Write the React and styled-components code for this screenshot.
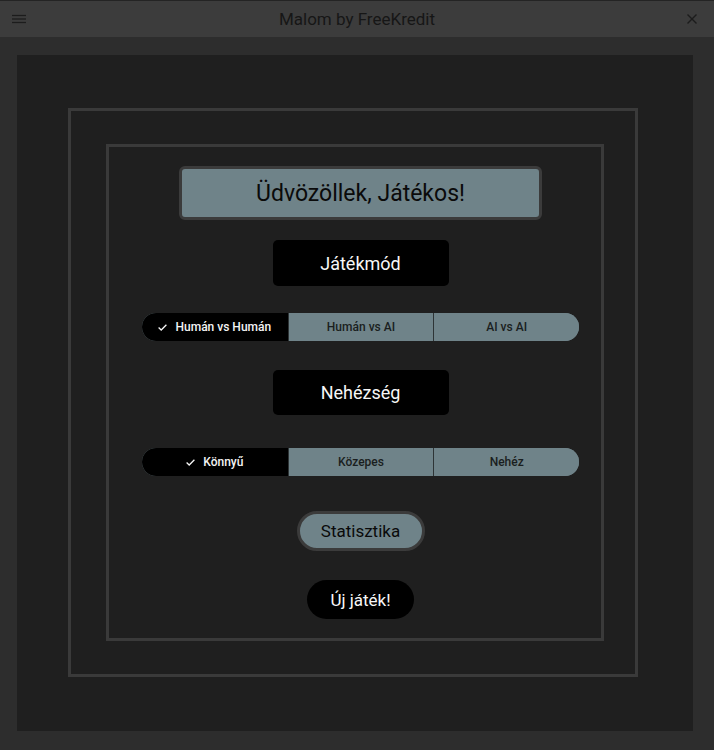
import React, { useState } from "react";
import styled, { createGlobalStyle } from "styled-components";

const GlobalStyle = createGlobalStyle`
  html, body {
    margin: 0;
    padding: 0;
    background: #2d2d2d;
  }
  body {
    font-family: Roboto, "Liberation Sans", Arial, sans-serif;
  }
  * {
    box-sizing: border-box;
  }
`;

const Window = styled.div`
  width: 714px;
  height: 750px;
  display: flex;
  flex-direction: column;
  background: #2d2d2d;
  border-top: 1px solid #242424;
`;

const TitleBar = styled.header`
  height: 36px;
  flex: 0 0 auto;
  display: grid;
  grid-template-columns: 40px 1fr 40px;
  align-items: center;
  background: #3c3c3c;
  color: #1d1d1d;
`;

const Title = styled.h1`
  margin: 0;
  text-align: center;
  font-size: 17px;
  font-weight: 400;
  color: #161616;
  letter-spacing: 0;
`;

const IconSlot = styled.button`
  border: 0;
  background: transparent;
  padding: 0;
  height: 36px;
  display: flex;
  align-items: center;
  justify-content: ${({ $end }) => ($end ? "flex-end" : "flex-start")};
  padding-left: ${({ $end }) => ($end ? "0" : "12px")};
  padding-right: ${({ $end }) => ($end ? "17px" : "0")};
  color: #1c1c1c;
  cursor: pointer;
`;

const Body = styled.main`
  flex: 1 1 auto;
  padding: 18px 21px 19px 17px;
`;

const Panel = styled.section`
  width: 676px;
  height: 676px;
  background: #1f1f1f;
  padding: 53px 55px 54px 51px;
`;

const Frame = styled.div`
  width: 100%;
  height: 100%;
  border: 3px solid #3a3a3a;
  display: flex;
  align-items: center;
  justify-content: center;
`;

const InnerFrame = styled.div`
  width: 498px;
  height: 497px;
  margin-left: 4px;
  border: 3px solid #3a3a3a;
  display: flex;
  flex-direction: column;
  align-items: center;
  justify-content: center;
  padding-left: 11px;
`;

const Welcome = styled.div`
  width: 363px;
  height: 54px;
  border: 3px solid #3b3b3b;
  border-radius: 6px;
  background: #6f8389;
  color: #0a0a0a;
  font-size: 23px;
  display: flex;
  align-items: center;
  justify-content: center;
  margin-bottom: 20px;
`;

const Heading = styled.div`
  width: 176px;
  height: ${({ $h }) => $h}px;
  border-radius: 5px;
  background: #000;
  color: #f7f7f7;
  font-size: 18px;
  font-weight: 400;
  display: flex;
  align-items: center;
  justify-content: center;
  margin-bottom: ${({ $mb }) => $mb}px;
`;

const Segmented = styled.div`
  width: 437px;
  height: 28px;
  border-radius: 14px;
  overflow: hidden;
  display: grid;
  grid-template-columns: repeat(3, 1fr);
  background: #6f8389;
  margin-bottom: ${({ $mb }) => $mb}px;
`;

const Segment = styled.button`
  border: 0;
  border-left: ${({ $first }) => ($first ? "0" : "1px solid #2e3436")};
  padding: 0;
  margin: 0;
  font-family: inherit;
  font-size: 12px;
  font-weight: 500;
  display: flex;
  align-items: center;
  justify-content: center;
  gap: 8px;
  background: ${({ $active }) => ($active ? "#000" : "#6f8389")};
  color: ${({ $active }) => ($active ? "#f4f4f4" : "#1a1e20")};
  cursor: pointer;
`;

const PillButton = styled.button`
  height: ${({ $h }) => $h}px;
  width: ${({ $w }) => $w}px;
  border-radius: 20px;
  border: ${({ $dark }) => ($dark ? "0" : "3px solid #3b3b3b")};
  background: ${({ $dark }) => ($dark ? "#000" : "#6f8389")};
  color: ${({ $dark }) => ($dark ? "#f7f7f7" : "#0a0a0a")};
  font-family: inherit;
  font-size: 17px;
  font-weight: 400;
  display: flex;
  align-items: center;
  justify-content: center;
  padding: 0;
  margin-bottom: ${({ $mb }) => $mb || 0}px;
  cursor: pointer;
`;

const MenuIcon = () => (
  <svg width="14" height="10" viewBox="0 0 14 10">
    <g stroke="#1c1c1c" strokeWidth="1.3">
      <line x1="0" y1="1.5" x2="14" y2="1.5" />
      <line x1="0" y1="5" x2="14" y2="5" />
      <line x1="0" y1="8.5" x2="14" y2="8.5" />
    </g>
  </svg>
);

const CloseIcon = () => (
  <svg width="10" height="10" viewBox="0 0 10 10">
    <g stroke="#1c1c1c" strokeWidth="1.4">
      <line x1="0.5" y1="0.5" x2="9.5" y2="9.5" />
      <line x1="9.5" y1="0.5" x2="0.5" y2="9.5" />
    </g>
  </svg>
);

const Check = () => (
  <svg width="9" height="7" viewBox="0 0 9 7">
    <path d="M0.6 3.6 L3.2 6 L8.4 0.8" fill="none" stroke="#f4f4f4" strokeWidth="1.3" />
  </svg>
);

function SegmentGroup({ options, value, onChange, mb }) {
  return (
    <Segmented $mb={mb}>
      {options.map((opt, i) => (
        <Segment
          key={opt}
          $first={i === 0}
          $active={opt === value}
          onClick={() => onChange(opt)}
        >
          {opt === value && <Check />}
          {opt}
        </Segment>
      ))}
    </Segmented>
  );
}

export default function App() {
  const [mode, setMode] = useState("Humán vs Humán");
  const [level, setLevel] = useState("Könnyű");

  return (
    <>
      <GlobalStyle />
      <Window>
        <TitleBar>
          <IconSlot aria-label="Menü">
            <MenuIcon />
          </IconSlot>
          <Title>Malom by FreeKredit</Title>
          <IconSlot $end aria-label="Bezárás">
            <CloseIcon />
          </IconSlot>
        </TitleBar>
        <Body>
          <Panel>
            <Frame>
              <InnerFrame>
                <Welcome>Üdvözöllek, Játékos!</Welcome>
                <Heading $h={46} $mb={27}>Játékmód</Heading>
                <SegmentGroup
                  options={["Humán vs Humán", "Humán vs AI", "AI vs AI"]}
                  value={mode}
                  onChange={setMode}
                  mb={29}
                />
                <Heading $h={45} $mb={33}>Nehézség</Heading>
                <SegmentGroup
                  options={["Könnyű", "Közepes", "Nehéz"]}
                  value={level}
                  onChange={setLevel}
                  mb={35}
                />
                <PillButton $w={128} $h={40} $mb={29}>Statisztika</PillButton>
                <PillButton $dark $w={107} $h={39}>Új játék!</PillButton>
              </InnerFrame>
            </Frame>
          </Panel>
        </Body>
      </Window>
    </>
  );
}
